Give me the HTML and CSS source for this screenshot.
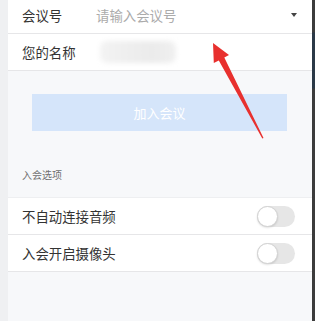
FILE: index.html
```html
<!DOCTYPE html>
<html lang="zh-CN">
<head>
<meta charset="utf-8">
<link rel="stylesheet" href="styles.css">
</head>
<body>
<div class="screen">
  <div class="side-left"></div>
  <main class="panel">
    <div class="row row-first">
      <span class="label">会议号</span>
      <span class="placeholder">请输入会议号</span>
      <span class="caret"></span>
    </div>
    <div class="row">
      <span class="label">您的名称</span>
      <span class="blurred"></span>
    </div>
    <div class="btn-wrap">
      <div class="join-btn">加入会议</div>
    </div>
    <div class="section-title">入会选项</div>
    <div class="options">
      <div class="row">
        <span class="label grow">不自动连接音频</span>
        <span class="toggle"><span class="knob"></span></span>
      </div>
      <div class="row">
        <span class="label grow">入会开启摄像头</span>
        <span class="toggle"><span class="knob"></span></span>
      </div>
    </div>
  </main>
  <div class="side-right"></div>
  <svg class="arrow" width="315" height="321" viewBox="0 0 315 321">
    <polygon points="213,43 229,55 224.3,57.6 263.5,138 262.3,138.4 218.8,60.5 213.8,63" fill="#e8302e"/>
  </svg>
</div>
</body>
</html>
```

FILE: styles.css
```css
html, body {
  margin: 0;
  padding: 0;
}
body {
  width: 315px;
  height: 321px;
  overflow: hidden;
  font-family: "Noto Sans CJK SC", "Noto Sans", sans-serif;
}
.screen {
  position: relative;
  display: flex;
  width: 315px;
  height: 321px;
}
.side-left {
  width: 8px;
  background: #eff0f2;
}
.side-right {
  width: 3px;
  background: linear-gradient(to bottom, #3c3c3c 0, #3c3c3c 32px, #2b3947 33px, #2b3947 88px, #3c3c3c 89px, #3c3c3c 100%);
}
.panel {
  flex: 1;
  background: #f7f8fa;
  display: flex;
  flex-direction: column;
}
.row {
  box-sizing: border-box;
  height: 37px;
  display: flex;
  align-items: center;
  background: #fff;
  border-bottom: 1px solid #e6e6e8;
  padding: 0 15px 0 14px;
}
.row-first {
  margin-top: -3px;
}
.label {
  width: 74px;
  font-size: 13.4px;
  color: #333;
  white-space: nowrap;
}
.label.grow {
  flex: 1;
}
.placeholder {
  flex: 1;
  font-size: 13.4px;
  color: #ababab;
}
.caret {
  width: 0;
  height: 0;
  border-left: 3.5px solid transparent;
  border-right: 3.5px solid transparent;
  border-top: 4px solid #444;
}
.blurred {
  display: block;
  width: 76px;
  height: 22px;
  margin-left: 4px;
  border-radius: 7px;
  background: linear-gradient(to right, #f3f3f3 0, #eeeeee 40%, #ebebeb 70%, #f0f0f0 100%);
  filter: blur(2.5px);
}
.btn-wrap {
  padding: 23px 25px 0 24px;
}
.join-btn {
  height: 37px;
  background: #d5e5fa;
  color: #fff;
  font-size: 13px;
  display: flex;
  align-items: center;
  justify-content: center;
}
.section-title {
  margin-top: 37px;
  padding-left: 14px;
  font-size: 10px;
  line-height: 14px;
  color: #6f6f6f;
}
.options {
  margin-top: 15px;
  border-top: 1px solid #eeeff1;
}
.options .row {
  padding-right: 17px;
}
.toggle {
  position: relative;
  box-sizing: border-box;
  width: 38px;
  height: 21px;
  border-radius: 11px;
  background: #e6e6e6;
}
.knob {
  position: absolute;
  left: 0;
  top: 0;
  box-sizing: border-box;
  width: 21px;
  height: 21px;
  border-radius: 50%;
  background: #fff;
  border: 1px solid #d2d2d2;
  box-shadow: 0 1px 2px rgba(0,0,0,0.12);
}
.arrow {
  position: absolute;
  left: 0;
  top: 0;
  pointer-events: none;
}
```
